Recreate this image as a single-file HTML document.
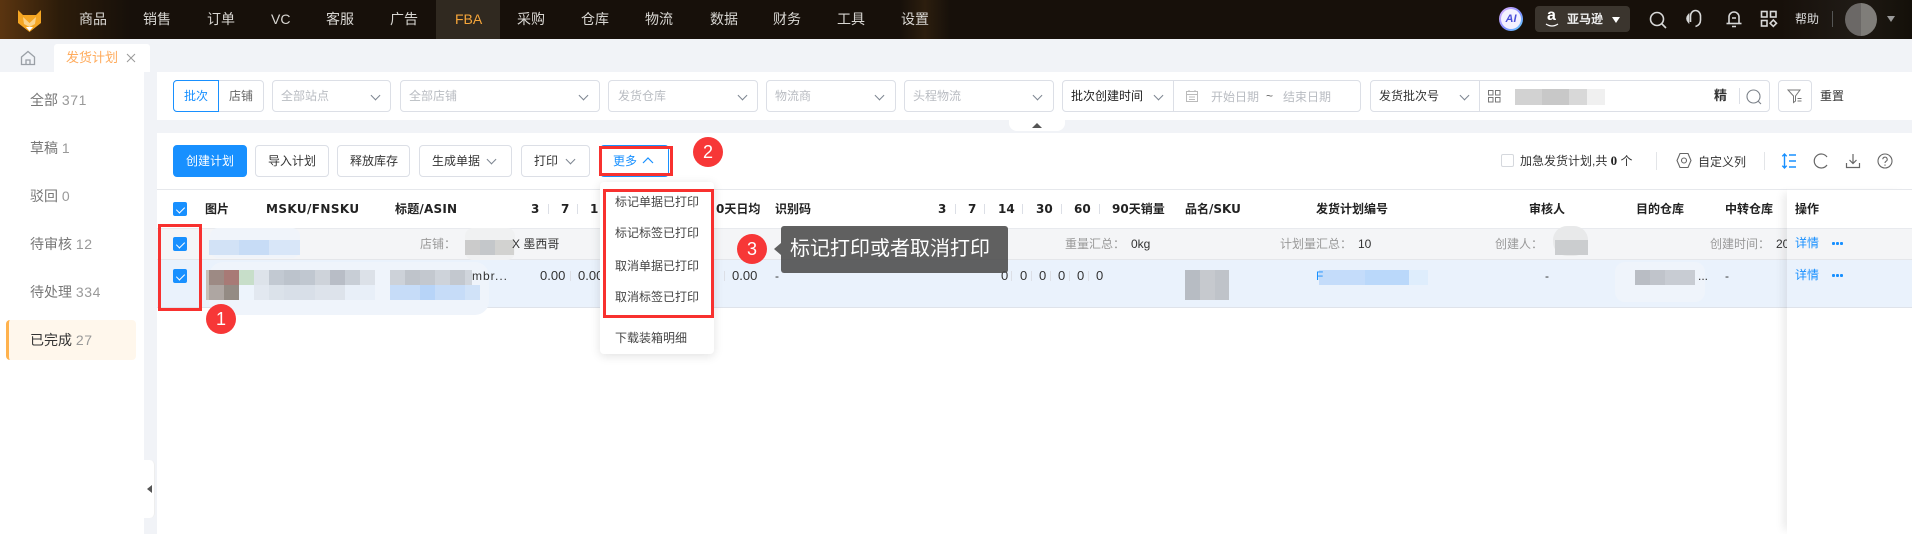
<!DOCTYPE html>
<html lang="zh"><head><meta charset="utf-8"><title>发货计划</title>
<style>
*{box-sizing:border-box}
html,body{margin:0;padding:0}
body{width:1912px;height:534px;position:relative;overflow:hidden;background:#fff;font-family:"Liberation Sans","Noto Sans CJK SC",sans-serif;font-size:12px;color:#333}
.a{position:absolute}
.t{position:absolute;white-space:nowrap;line-height:20px;height:20px}
.nav{color:#d8d6d2;font-size:14px;top:9px}
.box{position:absolute;background:#fff;border:1px solid #dcdfe6;border-radius:4px;height:32px}
.ph{color:#b9bcc2}
.chev{position:absolute;width:7px;height:7px;border-right:1px solid #7d8590;border-bottom:1px solid #7d8590;transform:rotate(45deg)}
.btn{position:absolute;top:145px;height:32px;background:#fff;border:1px solid #dcdfe6;border-radius:4px}
.side{color:#777;font-size:14px;left:30px}
.side b{font-weight:400;color:#999;letter-spacing:.6px}
.cb{position:absolute;left:173px;width:14px;height:14px;background:#1890ff;border-radius:2px}
.cb:after{content:"";position:absolute;left:5px;top:2.5px;width:4px;height:7px;border:solid #fff;border-width:0 1.2px 1.2px 0;transform:rotate(45deg)}
.h{font-weight:700;color:#222;top:199px}
.hm{font-family:"DejaVu Sans","Noto Sans CJK SC",sans-serif;font-weight:700;color:#222;top:199px;font-size:12px}
.sep{position:absolute;width:1px;height:10px;background:#dcdfe6}
.g{color:#999;top:234px}
.d{color:#333;top:266px}
.red{position:absolute;border:3px solid #f8312f}
.num{position:absolute;width:30px;height:30px;border-radius:50%;background:#f73737;color:#fff;font-size:18px;line-height:30px;text-align:center}
.m{left:615px;color:#444;font-size:12px}
.blue{color:#1890ff}
.p{position:absolute}
.dots{position:absolute;left:1832px;width:11px;height:3px;background:radial-gradient(circle at 1.500px 1.500px,#1890ff 1.500px,transparent 1.600px) 0 0/4px 3px repeat-x}
</style></head><body>

<!-- top bar -->
<div class="a" style="left:0;top:0;width:1912px;height:39px;background:linear-gradient(90deg,#5b3510 0,#2c1c0a 60px,#17100a 130px,#17100a 900px,#2c1e0e 925px,#17100a 950px,#17100a 1780px,#1f1a15 1850px,#141009 1912px)"></div>
<svg class="a" style="left:17px;top:8px" width="25" height="24" viewBox="0 0 25 24"><path d="M1 2l5 5h13l5-5v13l-11.500 9L1 15z" fill="#f5a623"/><path d="M6 9l6.500 6L19 9l-1 7-5.500 3L7 16z" fill="#fbd38a"/><path d="M9 19h7l-3.500 4z" fill="#fff"/></svg>
<div class="a" style="left:436px;top:0;width:64px;height:39px;background:#302920"></div>
<span class="t nav" style="left:79px">商品</span><span class="t nav" style="left:143px">销售</span><span class="t nav" style="left:207px">订单</span><span class="t nav" style="left:271px">VC</span><span class="t nav" style="left:326px">客服</span><span class="t nav" style="left:390px">广告</span><span class="t nav" style="left:455px;color:#f5a53a">FBA</span><span class="t nav" style="left:517px">采购</span><span class="t nav" style="left:581px">仓库</span><span class="t nav" style="left:645px">物流</span><span class="t nav" style="left:710px">数据</span><span class="t nav" style="left:773px">财务</span><span class="t nav" style="left:837px">工具</span><span class="t nav" style="left:901px">设置</span>

<div class="a" style="left:1499px;top:7px;width:24px;height:24px;border-radius:50%;background:linear-gradient(135deg,#e9b8ff,#7f8cff 55%,#62d6ff);padding:2px"><div style="width:20px;height:20px;border-radius:50%;background:#f3f1ff;color:#4a4fd8;font:italic 700 11px/20px 'Liberation Sans';text-align:center">AI</div></div>
<div class="a" style="left:1535px;top:6px;width:95px;height:26px;border-radius:4px;background:#3b352e"></div>
<span class="t" style="left:1547px;top:6px;color:#fff;font-size:16px;font-weight:700">a</span>
<svg class="a" style="left:1545px;top:23px" width="14" height="5" viewBox="0 0 14 5"><path d="M1 1q6 4 12 0" fill="none" stroke="#fff" stroke-width="1.300"/></svg>
<span class="t" style="left:1567px;top:9px;color:#eee;font-size:12px;font-weight:700">亚马逊</span>
<div class="a" style="left:1612px;top:17px;border:4px solid transparent;border-top:6px solid #fff"></div>
<svg class="a" style="left:1648px;top:10px" width="20" height="20" viewBox="0 0 20 20" fill="none" stroke="#d8d8d8" stroke-width="1.600"><circle cx="9" cy="9" r="6.500"/><path d="M14 14l4 4"/></svg>
<svg class="a" style="left:1684px;top:9px" width="20" height="20" viewBox="0 0 20 20" fill="none" stroke="#d8d8d8" stroke-width="1.600"><path d="M6.500 7a5 5.500 0 0 1 10 0v4q0 5-5 6.500"/><path d="M4.500 6q-3 3.500 0 7z"/><path d="M6.500 7v6"/></svg>
<svg class="a" style="left:1724px;top:9px" width="20" height="20" viewBox="0 0 20 20" fill="none" stroke="#d8d8d8" stroke-width="1.600"><path d="M5 14V8a5 5 0 0 1 10 0v6"/><path d="M2.500 14.500h15"/><path d="M8 17.500h4M8 9h4"/></svg>
<svg class="a" style="left:1760px;top:10px" width="18" height="18" viewBox="0 0 18 18" fill="none" stroke="#d8d8d8" stroke-width="1.600"><rect x="1.500" y="1.500" width="5.500" height="5.500"/><rect x="10.500" y="1.500" width="5.500" height="5.500"/><rect x="1.500" y="10.500" width="5.500" height="5.500"/><path d="M13.300 10l3.200 3.200-3.200 3.200-3.200-3.200z"/></svg>
<span class="t" style="left:1795px;top:9px;color:#ddd;font-size:12px">帮助</span>
<div class="a" style="left:1832px;top:11px;width:1px;height:16px;background:#555"></div>
<div class="a" style="left:1845px;top:3px;width:32px;height:33px;border-radius:50%;background:linear-gradient(90deg,#6b6866 50%,#7f7d79 50%)"></div>
<div class="a" style="left:1887px;top:16px;border:4px solid transparent;border-top:6px solid #999"></div>

<!-- tabs -->
<div class="a" style="left:0;top:39px;width:1912px;height:33px;background:#f1f3f7"></div>
<div class="a" style="left:54px;top:44px;width:96px;height:28px;background:#fff;border-radius:3px 3px 0 0"></div>
<svg class="a" style="left:20px;top:50px" width="16" height="16" viewBox="0 0 16 16" fill="none" stroke="#9a9fa6" stroke-width="1.300"><path d="M1.500 7L8 1.500 14.500 7v7.500h-13z"/><path d="M6 14.500V10h4v4.500"/></svg>
<span class="t" style="left:66px;top:48px;font-size:13px;color:#ffab5c">发货计划</span>
<svg class="a" style="left:126px;top:53px" width="10" height="10" viewBox="0 0 10 10" stroke="#999" stroke-width="1"><path d="M1 1l8 8M9 1L1 9"/></svg>

<!-- layout bg -->
<div class="a" style="left:0;top:72px;width:144px;height:462px;background:#fff"></div>
<div class="a" style="left:144px;top:72px;width:13px;height:462px;background:#f1f3f7"></div>
<div class="a" style="left:157px;top:120px;width:1755px;height:13px;background:#f1f3f7"></div>
<div class="a" style="left:144px;top:460px;width:11px;height:58px;background:#fff;border-radius:0 5px 5px 0;border-right:1px solid #eee"></div>
<div class="a" style="left:147px;top:485px;border:4px solid transparent;border-right:5px solid #555;border-left:0"></div>

<!-- sidebar -->
<span class="t side" style="top:90px">全部 <b>371</b></span>
<span class="t side" style="top:138px">草稿 <b>1</b></span>
<span class="t side" style="top:186px">驳回 <b>0</b></span>
<span class="t side" style="top:234px">待审核 <b>12</b></span>
<span class="t side" style="top:282px">待处理 <b>334</b></span>
<div class="a" style="left:6px;top:320px;width:130px;height:40px;background:#fff7ec;border-radius:4px;border-left:3px solid #ffb24d"></div>
<span class="t side" style="top:330px;color:#333">已完成 <b>27</b></span>

<!-- filters -->
<div class="box" style="left:173px;top:80px;width:91px"></div>
<div class="box" style="left:173px;top:80px;width:46px;border-color:#1890ff;border-radius:4px 0 0 4px"></div>
<span class="t blue" style="left:184px;top:86px">批次</span><span class="t" style="left:229px;top:86px;color:#666">店铺</span>

<div class="box" style="left:272px;top:80px;width:119px"></div><span class="t ph" style="left:281px;top:86px">全部站点</span><i class="chev" style="left:372px;top:92px"></i>
<div class="box" style="left:400px;top:80px;width:200px"></div><span class="t ph" style="left:409px;top:86px">全部店铺</span><i class="chev" style="left:580px;top:92px"></i>
<div class="box" style="left:608px;top:80px;width:150px"></div><span class="t ph" style="left:618px;top:86px">发货仓库</span><i class="chev" style="left:739px;top:92px"></i>
<div class="box" style="left:766px;top:80px;width:130px"></div><span class="t ph" style="left:775px;top:86px">物流商</span><i class="chev" style="left:876px;top:92px"></i>
<div class="box" style="left:904px;top:80px;width:150px"></div><span class="t ph" style="left:913px;top:86px">头程物流</span><i class="chev" style="left:1034px;top:92px"></i>

<div class="box" style="left:1062px;top:80px;width:299px"></div>
<div class="a" style="left:1173px;top:80px;width:1px;height:32px;background:#dcdfe6"></div>
<span class="t" style="left:1071px;top:86px;color:#222">批次创建时间</span><i class="chev" style="left:1155px;top:92px"></i>
<svg class="a" style="left:1185px;top:89px" width="14" height="14" viewBox="0 0 14 14" fill="none" stroke="#bbb"><rect x="1.500" y="2.500" width="11" height="10"/><path d="M1.500 5.500h11M4 8h6M4 10.500h6M4 1v2M10 1v2"/></svg>
<span class="t ph" style="left:1211px;top:87px">开始日期</span><span class="t" style="left:1266px;top:86px;color:#666">~</span><span class="t ph" style="left:1283px;top:87px">结束日期</span>

<div class="box" style="left:1370px;top:80px;width:400px"></div>
<div class="a" style="left:1479px;top:80px;width:1px;height:32px;background:#dcdfe6"></div>
<span class="t" style="left:1379px;top:86px;color:#333">发货批次号</span><i class="chev" style="left:1461px;top:92px"></i>
<svg class="a" style="left:1487px;top:89px" width="14" height="14" viewBox="0 0 14 14" fill="none" stroke="#777"><rect x="1.500" y="1.500" width="4.500" height="4.500"/><rect x="8.500" y="1.500" width="4.500" height="4.500"/><rect x="1.500" y="8.500" width="4.500" height="4.500"/><rect x="8.500" y="8.500" width="4.500" height="4.500"/></svg>
<div class="p" style="left:1515px;top:89px;width:90px;height:16px;background:linear-gradient(90deg,#d2d2d2 0 30%,#c8c8c8 30% 60%,#d8d8d8 60% 80%,#f0f0f0 80%)"></div>
<span class="t" style="left:1714px;top:86px;font-size:13px;font-weight:700;color:#333">精</span>
<div class="a" style="left:1739px;top:88px;width:1px;height:16px;background:#dcdfe6"></div>
<svg class="a" style="left:1746px;top:89px" width="16" height="16" viewBox="0 0 16 16" fill="none" stroke="#7a8088" stroke-width="1.100"><circle cx="7.500" cy="7.500" r="6.500"/><path d="M12 12l3 3"/></svg>
<div class="box" style="left:1778px;top:80px;width:34px"></div>
<svg class="a" style="left:1787px;top:88px" width="16" height="16" viewBox="0 0 16 16" fill="none" stroke="#777"><path d="M1 2h12L8.500 8v5l-2 1.500V8z"/><path d="M10.500 10.500h4M10.500 13h4"/></svg>
<span class="t" style="left:1820px;top:86px;color:#333">重置</span>
<div class="a" style="left:1009px;top:120px;width:56px;height:11px;background:#fff;border-radius:0 0 8px 8px"></div>
<div class="a" style="left:1032px;top:123px;border:5px solid transparent;border-bottom:5px solid #555;border-top:0"></div>

<!-- toolbar -->
<div class="btn" style="left:173px;width:74px;background:#1890ff;border-color:#1890ff"></div><span class="t" style="left:186px;top:151px;color:#fff">创建计划</span>
<div class="btn" style="left:255px;width:74px"></div><span class="t" style="left:268px;top:151px">导入计划</span>
<div class="btn" style="left:337px;width:73px"></div><span class="t" style="left:350px;top:151px">释放库存</span>
<div class="btn" style="left:419px;width:93px"></div><span class="t" style="left:432px;top:151px">生成单据</span><i class="chev" style="left:488px;top:156px"></i>
<div class="btn" style="left:521px;width:69px"></div><span class="t" style="left:534px;top:151px">打印</span><i class="chev" style="left:567px;top:156px"></i>
<div class="btn" style="left:600px;width:69px;border-color:#1890ff"></div><span class="t blue" style="left:613px;top:151px">更多</span>
<svg class="a" style="left:642px;top:156px" width="12" height="8" viewBox="0 0 12 8" fill="none" stroke="#1890ff" stroke-width="1.200"><path d="M1 7l5-5 5 5"/></svg>
<div class="red" style="left:599px;top:146px;width:74px;height:30px"></div>
<div class="num" style="left:693px;top:137px">2</div>

<div class="a" style="left:1501px;top:154px;width:13px;height:13px;border:1px solid #d5d8dd;border-radius:2px"></div>
<span class="t" style="left:1520px;top:151px">加急发货计划,共 <b style="font-family:'Liberation Serif';font-size:13px;color:#222">0</b> 个</span>
<div class="a" style="left:1656px;top:152px;width:1px;height:18px;background:#e3e5e8"></div>
<svg class="a" style="left:1676px;top:152px" width="16" height="17" viewBox="0 0 16 17" fill="none" stroke="#666" stroke-width="1.100"><path d="M4 1.500h8l3 7-3 7H4l-3-7z"/><circle cx="8" cy="8.500" r="2.500"/></svg>
<span class="t" style="left:1698px;top:152px">自定义列</span>
<div class="a" style="left:1764px;top:152px;width:1px;height:18px;background:#e3e5e8"></div>
<svg class="a" style="left:1781px;top:153px" width="16" height="16" viewBox="0 0 16 16" fill="none" stroke="#1890ff" stroke-width="1.400"><path d="M3.500 1v14M1.300 3.300L3.500 1l2.200 2.300M1.300 12.700L3.500 15l2.200-2.300M8 2h7M8 8h7M8 14h7"/></svg>
<svg class="a" style="left:1813px;top:153px" width="16" height="16" viewBox="0 0 16 16" fill="none" stroke="#666" stroke-width="1.200"><path d="M14 4A7 7 0 1 0 14 12"/></svg>
<svg class="a" style="left:1845px;top:153px" width="16" height="16" viewBox="0 0 16 16" fill="none" stroke="#666" stroke-width="1.200"><path d="M8 1v9M4.500 7L8 10.500 11.500 7M1.500 10v4.500h13V10"/></svg>
<svg class="a" style="left:1877px;top:153px" width="16" height="16" viewBox="0 0 16 16" fill="none" stroke="#666" stroke-width="1.100"><circle cx="8" cy="8" r="7"/><path d="M5.800 6.300a2.200 2.200 0 1 1 3.200 2q-1 .6-1 1.700M8 11.500v1.300"/></svg>

<!-- table -->
<div class="a" style="left:157px;top:189px;width:1755px;height:1px;background:#e6e8ec"></div>
<div class="a" style="left:157px;top:228px;width:1755px;height:32px;background:#f4f5f7;border-top:1px solid #e8eaee;border-bottom:1px solid #e4e6ea"></div>
<div class="a" style="left:157px;top:260px;width:1755px;height:48px;background:#eaf2fc;border-bottom:1px solid #dfe3ea"></div>

<!-- mosaics -->
<div class="a" style="left:210px;top:228px;width:90px;height:30px;background:#f0f4fa;border-radius:8px"></div>
<div class="p" style="left:209px;top:240px;width:91px;height:15px;background:linear-gradient(90deg,#d2e2f6 0 33%,#c7dcf6 33% 66%,#d8e6f8 66%)"></div>
<div class="a" style="left:209px;top:262px;width:280px;height:53px;background:#eff4fb;border-radius:14px"></div>
<div class="p" style="left:206px;top:270px;width:3px;height:30px;background:#c8bfb6"></div>
<div class="p" style="left:209px;top:270px;width:166px;height:15px;background:linear-gradient(90deg,#9d8a84 0 15px,#a87a76 15px 30px,#c7dec9 30px 45px,#dde3ea 45px 60px,#c2c9d2 60px 75px,#bcc3cc 75px 91px,#c0c7d0 91px 106px,#ced3da 106px 121px,#b8bdc6 121px 136px,#c8ced6 136px 151px,#dce1e8 151px)"></div>
<div class="p" style="left:209px;top:285px;width:166px;height:15px;background:linear-gradient(90deg,#aea6a2 0 15px,#948b84 15px 30px,#edf4fc 30px 45px,#e2e8f0 45px 60px,#dbe2ea 60px 75px,#d8dfe8 75px 106px,#dde3eb 106px 136px,#e8eff8 136px)"></div>
<div class="p" style="left:390px;top:270px;width:82px;height:15px;background:linear-gradient(90deg,#cdd2d9 0 15px,#bfc4cb 15px 30px,#c3c8cf 30px 45px,#ced3da 45px 60px,#c3c8cf 60px 75px,#d0d5dc 75px)"></div>
<div class="p" style="left:390px;top:285px;width:90px;height:15px;background:linear-gradient(90deg,#c6dcf8 0 30px,#b7d4f8 30px 45px,#c6dcf8 45px 75px,#d0e2f8 75px)"></div>
<div class="a" style="left:465px;top:228px;width:50px;height:32px;background:#f0f1f2;border-radius:8px"></div>
<div class="p" style="left:465px;top:240px;width:49px;height:15px;background:linear-gradient(90deg,#cbcbcb 0 15px,#c4c7ca 15px 30px,#d2d2d0 30px)"></div>
<div class="p" style="left:1185px;top:270px;width:44px;height:30px;background:linear-gradient(90deg,#b7bcc3 0 15px,#c6c9ce 15px 30px,#bfc3c9 30px)"></div>
<div class="p" style="left:1319px;top:270px;width:109px;height:15px;background:linear-gradient(90deg,#c4dcfa 0 46px,#bad8fa 46px 90px,#deedfc 90px)"></div>
<div class="a" style="left:1553px;top:226px;width:35px;height:30px;background:#e8e9ea;border-radius:14px"></div>
<div class="p" style="left:1555px;top:240px;width:33px;height:15px;background:#cbcdcf"></div>
<div class="a" style="left:1615px;top:262px;width:90px;height:40px;background:#eff4fb;border-radius:10px"></div>
<div class="p" style="left:1635px;top:270px;width:60px;height:15px;background:linear-gradient(90deg,#b9bdc4 0 15px,#c0c4cb 15px 30px,#c8ccd3 30px)"></div>

<div class="cb" style="top:202px"></div><div class="cb" style="top:237px"></div><div class="cb" style="top:269px"></div>

<span class="t h" style="left:205px">图片</span>
<span class="t hm" style="left:266px;letter-spacing:.4px">MSKU/FNSKU</span>
<span class="t hm" style="left:395px;letter-spacing:.2px"><span style="font-family:'Noto Sans CJK SC'">标题</span>/ASIN</span>
<span class="t hm" style="left:531px">3</span><i class="sep" style="left:548px;top:204px"></i><span class="t hm" style="left:561px">7</span><i class="sep" style="left:577px;top:204px"></i><span class="t hm" style="left:590px">1</span>
<span class="t h" style="left:716px;font-family:'DejaVu Sans','Noto Sans CJK SC',sans-serif">0天日均</span>
<span class="t h" style="left:775px">识别码</span>
<span class="t hm" style="left:938px">3</span><i class="sep" style="left:955px;top:204px"></i><span class="t hm" style="left:968px">7</span><i class="sep" style="left:984px;top:204px"></i><span class="t hm" style="left:998px">14</span><i class="sep" style="left:1022px;top:204px"></i><span class="t hm" style="left:1036px">30</span><i class="sep" style="left:1061px;top:204px"></i><span class="t hm" style="left:1074px">60</span><i class="sep" style="left:1099px;top:204px"></i><span class="t h" style="left:1112px"><span style="font-family:'DejaVu Sans'">90</span>天销量</span>
<span class="t hm" style="left:1185px"><span style="font-family:'Noto Sans CJK SC'">品名</span>/SKU</span>
<span class="t h" style="left:1316px">发货计划编号</span>
<span class="t h" style="left:1529px">审核人</span>
<span class="t h" style="left:1636px">目的仓库</span>
<span class="t h" style="left:1725px">中转仓库</span>

<!-- group row text -->
<span class="t g" style="left:420px">店铺：</span>
<span class="t" style="left:512px;top:234px">X 墨西哥</span>
<span class="t g" style="left:1065px">重量汇总：</span><span class="t" style="left:1131px;top:234px">0kg</span>
<span class="t g" style="left:1280px">计划量汇总：</span><span class="t" style="left:1358px;top:234px">10</span>
<span class="t g" style="left:1495px">创建人：</span>
<span class="t g" style="left:1710px">创建时间：</span><span class="t" style="left:1776px;top:234px">20</span>

<!-- data row text -->
<span class="t d" style="left:472px;letter-spacing:1px">mbr...</span>
<span class="t d" style="left:540px;font-size:13px">0.00</span><i class="sep" style="left:570px;top:271px"></i><span class="t d" style="left:578px;font-size:13px">0.00</span>
<i class="sep" style="left:724px;top:271px"></i><span class="t d" style="left:732px;font-size:13px">0.00</span><span class="t d" style="left:775px">-</span>
<span class="t d" style="left:1001px;font-size:13px">0</span><i class="sep" style="left:1011px;top:271px"></i><span class="t d" style="left:1020px;font-size:13px">0</span><i class="sep" style="left:1031px;top:271px"></i><span class="t d" style="left:1039px;font-size:13px">0</span><i class="sep" style="left:1050px;top:271px"></i><span class="t d" style="left:1058px;font-size:13px">0</span><i class="sep" style="left:1069px;top:271px"></i><span class="t d" style="left:1077px;font-size:13px">0</span><i class="sep" style="left:1088px;top:271px"></i><span class="t d" style="left:1096px;font-size:13px">0</span>
<span class="t d blue" style="left:1316px">F</span>
<span class="t d" style="left:1545px">-</span>
<span class="t d" style="left:1698px">...</span>
<span class="t d" style="left:1725px">-</span>

<!-- fixed column -->
<div class="a" style="left:1787px;top:189px;width:125px;height:345px;box-shadow:-8px 0 8px -4px rgba(0,0,0,.08)"></div>
<div class="a" style="left:1787px;top:190px;width:125px;height:38px;background:#fff"></div>
<div class="a" style="left:1787px;top:228px;width:125px;height:32px;background:#f4f5f7;border-top:1px solid #e8eaee;border-bottom:1px solid #e4e6ea"></div>
<div class="a" style="left:1787px;top:260px;width:125px;height:48px;background:#eaf2fc;border-bottom:1px solid #dfe3ea"></div>
<div class="a" style="left:1787px;top:308px;width:125px;height:226px;background:#fff"></div>
<span class="t h" style="left:1795px">操作</span>
<span class="t blue" style="left:1795px;top:233px">详情</span><i class="dots" style="top:242px"></i>
<span class="t blue" style="left:1795px;top:265px">详情</span><i class="dots" style="top:274px"></i>

<!-- annotations -->
<div class="red" style="left:158px;top:224px;width:44px;height:87px"></div>
<div class="num" style="left:206px;top:304px">1</div>

<div class="a" style="left:600px;top:182px;width:114px;height:172px;background:#fff;border-radius:4px;box-shadow:0 2px 10px rgba(0,0,0,.12)"></div>
<span class="t m" style="top:192px">标记单据已打印</span>
<span class="t m" style="top:223px">标记标签已打印</span>
<span class="t m" style="top:256px">取消单据已打印</span>
<span class="t m" style="top:287px">取消标签已打印</span>
<span class="t m" style="top:328px">下载装箱明细</span>
<div class="red" style="left:603px;top:189px;width:111px;height:129px"></div>

<div class="num" style="left:737px;top:234px">3</div>
<div class="a" style="left:774px;top:243px;border:6px solid transparent;border-right:7px solid #606060;border-left:0"></div>
<div class="a" style="left:781px;top:226px;width:227px;height:47px;background:rgba(75,75,75,.88);border-radius:3px"></div>
<span class="t" style="left:790px;top:234px;height:30px;line-height:30px;font-size:20px;color:#fff">标记打印或者取消打印</span>

</body></html>
